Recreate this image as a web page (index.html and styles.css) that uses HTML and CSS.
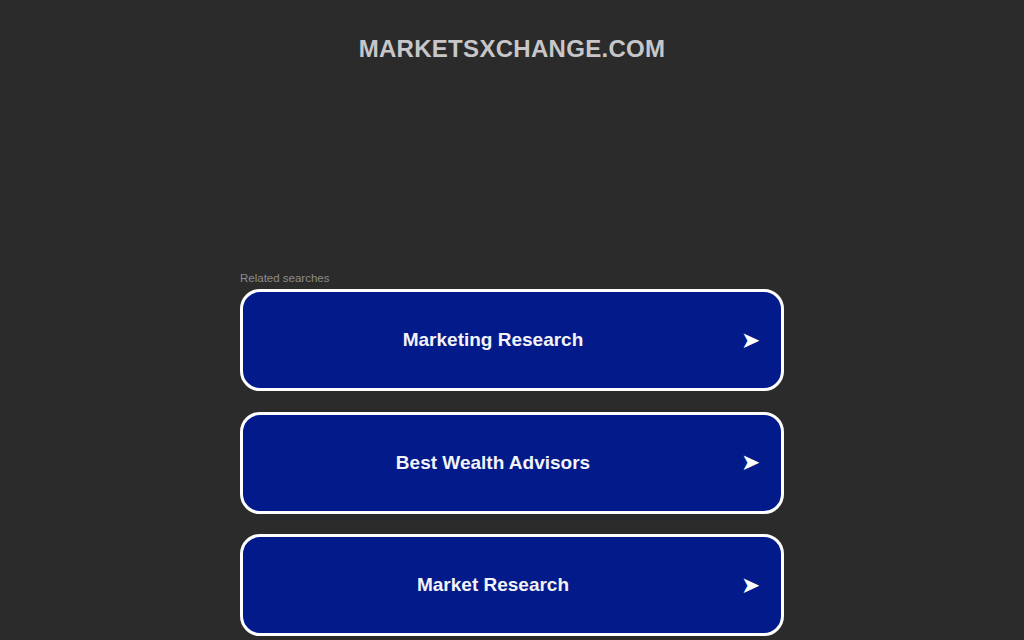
FILE: index.html
```html
<!DOCTYPE html>
<html lang="en">
<head>
<meta charset="utf-8">
<title>marketsxchange.com</title>
<link rel="stylesheet" href="styles.css">
</head>
<body>
<div class="page">
  <header class="header">
    <h1 class="domain">MARKETSXCHANGE.COM</h1>
  </header>
  <main class="content">
    <div class="related-label">Related searches</div>
    <ul class="links">
      <li><a class="card" href="#"><span class="card-text">Marketing Research</span><span class="card-arrow">➤</span></a></li>
      <li><a class="card" href="#"><span class="card-text">Best Wealth Advisors</span><span class="card-arrow">➤</span></a></li>
      <li><a class="card" href="#"><span class="card-text">Market Research</span><span class="card-arrow">➤</span></a></li>
    </ul>
  </main>
</div>
</body>
</html>
```

FILE: styles.css
```css
html, body {
  margin: 0;
  padding: 0;
  background: #2b2b2b;
  font-family: "Liberation Sans", Arial, sans-serif;
  overflow: hidden;
}

.page {
  display: flex;
  flex-direction: column;
  align-items: center;
}

.header {
  padding-top: 35px;
  height: 272px;
  box-sizing: border-box;
}

.domain {
  margin: 0;
  font-size: 24px;
  line-height: 28px;
  font-weight: bold;
  color: #c7c7c9;
  letter-spacing: 0.3px;
}

.content {
  width: 544px;
}

.related-label {
  font-size: 11.5px;
  line-height: 13px;
  color: #8c8c8c;
  margin-bottom: 4px;
}

.links {
  list-style: none;
  margin: 0;
  padding: 0;
  display: flex;
  flex-direction: column;
  gap: 20.5px;
}

.card {
  display: flex;
  align-items: center;
  height: 102px;
  box-sizing: border-box;
  border: 3px solid #ffffff;
  border-radius: 20px;
  background: #021a8a;
  color: #f3f3f8;
  text-decoration: none;
}

.card-text {
  flex: 1;
  text-align: center;
  padding-left: 2px;
  font-size: 19px;
  font-weight: bold;
}

.card-arrow {
  width: 19px;
  padding-right: 21px;
  font-family: "DejaVu Sans", sans-serif;
  font-size: 23px;
  line-height: 1;
  color: #ffffff;
}
```
